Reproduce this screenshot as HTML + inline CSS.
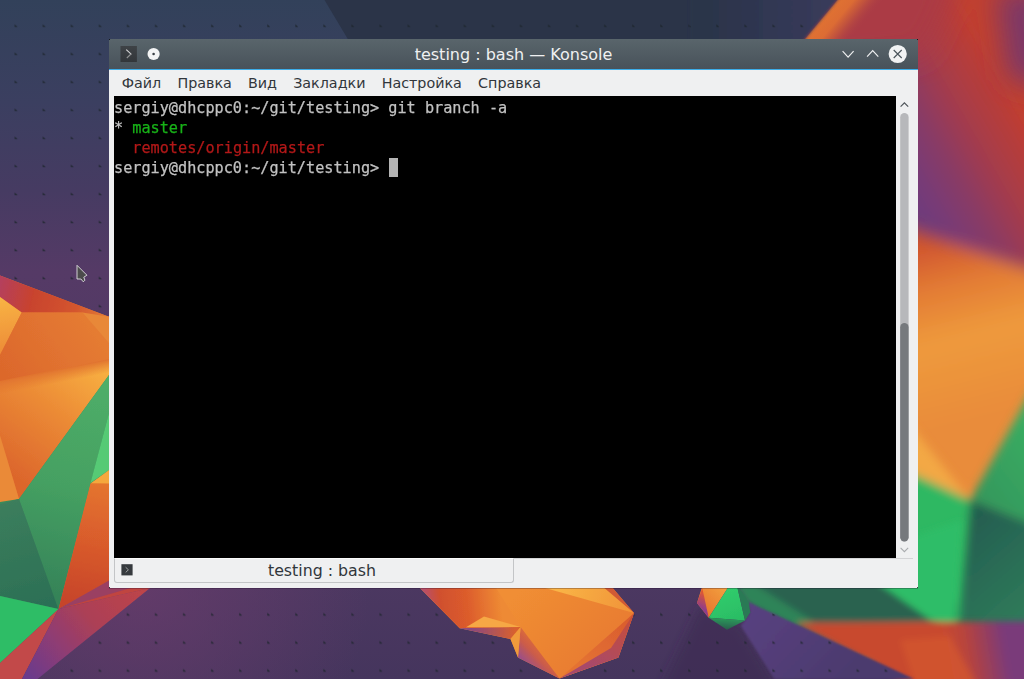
<!DOCTYPE html>
<html lang="ru">
<head>
<meta charset="utf-8">
<title>testing : bash — Konsole</title>
<style>
html,body{margin:0;padding:0;}
body{width:1024px;height:679px;overflow:hidden;position:relative;background:#46345d;font-family:"DejaVu Sans","Liberation Sans",sans-serif;}
#wall{position:absolute;left:0;top:0;width:1024px;height:679px;display:block;}
#win{position:absolute;left:109px;top:39px;width:809px;height:549px;background:#eff0f1;box-shadow:0 1px 0 rgba(30,8,40,0.28);}
#title{position:absolute;left:0;top:0;width:809px;height:30px;background:linear-gradient(#59656b,#48525a);}
#title .cap{position:absolute;left:0;top:1px;width:809px;height:29px;line-height:30px;text-align:center;color:#eff0f1;font-size:16px;white-space:nowrap;}
#hl{position:absolute;left:0;top:30px;width:809px;height:1px;background:#3daee9;}
#menu{position:absolute;left:4.6px;top:31px;height:26px;line-height:27px;font-size:14.3px;color:#31363b;white-space:nowrap;}
#menu span{display:inline-block;padding:0 8.1px;}
#term{position:absolute;left:5px;top:57px;width:782px;height:462px;background:#000;}
#term pre{margin:0;position:absolute;left:0px;top:2px;will-change:transform;font-family:"DejaVu Sans Mono","Liberation Mono",monospace;font-size:15.2px;line-height:20px;color:#c2c2c2;-webkit-text-stroke:0.25px;}
.cn{position:absolute;width:1px;height:1px;background:rgba(0,0,0,0.75);}
.g{color:#18b218}.r{color:#b21818}
#cur{position:absolute;left:274.5px;top:62px;width:9.4px;height:18.5px;background:#b4b4b4;}
#sb{position:absolute;left:787px;top:57px;width:22px;height:462px;}
#tabbar{position:absolute;left:5px;top:519px;width:799px;height:1px;background:#d3d4d6;}
#tab{position:absolute;left:5px;top:519px;width:398px;height:23px;border:1px solid #c3c5c7;border-top:1px solid #fbfbfb;border-radius:0 0 3px 3px;box-sizing:content-box;background:#eff0f1;}
#tab .t{position:absolute;left:0;top:0;width:100%;height:23px;line-height:23px;text-align:center;font-size:15.8px;color:#31363b;padding-left:16px;box-sizing:border-box;}
</style>
</head>
<body>
<svg id="wall" width="1024" height="679" viewBox="0 0 1024 679">
<defs>
<linearGradient id="base" x1="0" y1="0" x2="0" y2="1">
<stop offset="0" stop-color="#32415a"/><stop offset="0.15" stop-color="#3b3f60"/><stop offset="0.28" stop-color="#463b62"/><stop offset="0.4" stop-color="#553a66"/><stop offset="0.85" stop-color="#4c3861"/><stop offset="1" stop-color="#45355d"/>
</linearGradient>
<pattern id="dots" x="14.4" y="23.9" width="28.07" height="28.03" patternUnits="userSpaceOnUse">
<path d="M0.3 0.3 L3.2 3.2 L0.3 3.2 Z" fill="#1c242c" opacity="0.85"/>
</pattern>
<filter id="b8" x="-10%" y="-10%" width="120%" height="120%"><feGaussianBlur stdDeviation="8"/></filter>
<filter id="b14" x="-30%" y="-30%" width="160%" height="160%"><feGaussianBlur stdDeviation="14"/></filter>
<filter id="b3" x="-10%" y="-10%" width="120%" height="120%"><feGaussianBlur stdDeviation="2.5"/></filter>
<filter id="b5" x="-10%" y="-10%" width="120%" height="120%"><feGaussianBlur stdDeviation="5"/></filter>
<filter id="b3h" x="-10%" y="-10%" width="120%" height="120%"><feGaussianBlur stdDeviation="3.2"/></filter>
<filter id="b1" x="-10%" y="-10%" width="120%" height="120%"><feGaussianBlur stdDeviation="0.9"/></filter>
<filter id="b06" x="-5%" y="-5%" width="110%" height="110%"><feGaussianBlur stdDeviation="0.55"/></filter>
<filter id="b2" x="-10%" y="-20%" width="120%" height="140%"><feGaussianBlur stdDeviation="1.8"/></filter>
<filter id="b4" x="-10%" y="-10%" width="120%" height="120%"><feGaussianBlur stdDeviation="4"/></filter>
</defs>
<rect width="1024" height="679" fill="url(#base)"/>
<radialGradient id="glow1" gradientUnits="userSpaceOnUse" cx="140" cy="585" r="230"><stop offset="0" stop-color="#6a3c6c" stop-opacity="0.75"/><stop offset="1" stop-color="#6a3c6c" stop-opacity="0"/></radialGradient>
<rect width="1024" height="679" fill="url(#glow1)"/>
<g filter="url(#b5)"><polygon points="700,606 741,626 778,690 660,690" fill="#382b4e" opacity="0.55"/></g>
<polygon points="324.5,0 850,0 740,140 420,160" fill="#2b3448"/>
<rect width="1024" height="679" fill="url(#dots)"/>

<g id="leftpoly" filter="url(#b06)">
<defs>
<linearGradient id="lgA" gradientUnits="userSpaceOnUse" x1="0" y1="285" x2="109" y2="310"><stop offset="0" stop-color="#b5405c"/><stop offset="0.3" stop-color="#c8432f"/><stop offset="0.7" stop-color="#d4552e"/><stop offset="1" stop-color="#e27c36"/></linearGradient>
<linearGradient id="lgB" gradientUnits="userSpaceOnUse" x1="0" y1="300" x2="8" y2="355"><stop offset="0" stop-color="#f8b244"/><stop offset="1" stop-color="#ec8a36"/></linearGradient>
<linearGradient id="lgC" gradientUnits="userSpaceOnUse" x1="100" y1="315" x2="10" y2="380"><stop offset="0" stop-color="#e67e34"/><stop offset="1" stop-color="#dc682c"/></linearGradient>
<linearGradient id="lgE" gradientUnits="userSpaceOnUse" x1="105" y1="365" x2="20" y2="480"><stop offset="0" stop-color="#f9b242"/><stop offset="0.45" stop-color="#ec8c36"/><stop offset="1" stop-color="#dc662c"/></linearGradient>
<linearGradient id="lgSoft" gradientUnits="userSpaceOnUse" x1="50" y1="371" x2="52.6" y2="384"><stop offset="0" stop-color="#e1742f" stop-opacity="1"/><stop offset="1" stop-color="#e1742f" stop-opacity="0"/></linearGradient>
<linearGradient id="lgG" gradientUnits="userSpaceOnUse" x1="105" y1="380" x2="50" y2="600"><stop offset="0" stop-color="#4fae68"/><stop offset="0.5" stop-color="#45a062"/><stop offset="1" stop-color="#358258"/></linearGradient>
<linearGradient id="lgJ" gradientUnits="userSpaceOnUse" x1="100" y1="485" x2="75" y2="605"><stop offset="0" stop-color="#e4742f"/><stop offset="0.5" stop-color="#d85a2c"/><stop offset="1" stop-color="#c6442c"/></linearGradient>
<linearGradient id="lgK" gradientUnits="userSpaceOnUse" x1="10" y1="500" x2="40" y2="605"><stop offset="0" stop-color="#3c7e5c"/><stop offset="1" stop-color="#2c7056"/></linearGradient>
<linearGradient id="lgP" gradientUnits="userSpaceOnUse" x1="140" y1="590" x2="30" y2="679"><stop offset="0" stop-color="#bc444a"/><stop offset="0.4" stop-color="#ac4056"/><stop offset="0.7" stop-color="#8e3c74"/><stop offset="1" stop-color="#6a3a8c"/></linearGradient>
</defs>
<!-- base orange under everything on the left -->
<polygon points="0,275.5 140,328.5 140,570 112,580.5 58.5,609 0,600" fill="#e2722f"/>
<polygon points="0,275.5 109,316.7 140,328.5 140,335 82.5,312.6 21.7,312.6 0,297" fill="url(#lgA)"/>
<polygon points="0,297 21.7,312.6 0,355" fill="url(#lgB)"/>
<polygon points="21.7,312.6 82.5,312.6 140,350 140,354 0,382 0,355" fill="url(#lgC)"/>
<polygon points="82.5,312.6 109,316.7 140,328.5 140,350 109,343" fill="#e88838"/>
<polygon points="0,382 109,360 140,354 140,340 19,499 0,435.5" fill="url(#lgE)"/>
<polygon points="0,381 109,359 140,353 140,368 109,374 0,396" fill="url(#lgSoft)"/>
<polygon points="0,435.5 19,499 0,504" fill="#ea8a38"/>
<polygon points="0,502 19,499 109,375 140,332 140,450 90.5,483.4 58.5,609 0,663" fill="#3a8a5a"/>
<polygon points="109,375 140,332 140,420 109,413 90.8,482.6 58.5,609 19,499" fill="url(#lgG)"/>
<polygon points="109,413 140,400 140,450 109,470 90.5,483" fill="#56ca74"/>
<polygon points="90.5,483.4 109,470 140,450 140,484 109,484" fill="#f5a83c"/>
<polygon points="90.5,483.4 140,483.4 140,575 112,580.5 58.5,609" fill="url(#lgJ)"/>
<polygon points="0,504 19,499 58.5,609 0,596" fill="url(#lgK)"/>
<polygon points="0,596 58.5,609 0,663" fill="#2ebd66"/>
<polygon points="0,663 58.5,609 22,679 0,679" fill="#c2484a"/>
<polygon points="58.5,609 108.6,580.8 140,570 150,575 150,588" fill="#9a4062"/>
<polygon points="58.5,609 131.4,587.8 150,582 150.4,588" fill="#c0443f"/>
<polygon points="58.5,609 150,588 37.5,679 22,679" fill="url(#lgP)"/>
</g>

<g id="botpoly" filter="url(#b06)">
<defs>
<linearGradient id="bgMain" gradientUnits="userSpaceOnUse" x1="520" y1="590" x2="600" y2="670"><stop offset="0" stop-color="#f08e34"/><stop offset="1" stop-color="#e87a30"/></linearGradient>
<linearGradient id="bgR" gradientUnits="userSpaceOnUse" x1="634" y1="614" x2="585" y2="670"><stop offset="0" stop-color="#d85a2e"/><stop offset="1" stop-color="#e47232"/></linearGradient>
<linearGradient id="bgRR" gradientUnits="userSpaceOnUse" x1="634" y1="614" x2="600" y2="672"><stop offset="0" stop-color="#c84e36"/><stop offset="1" stop-color="#a84a6a"/></linearGradient>
<linearGradient id="bgF" gradientUnits="userSpaceOnUse" x1="545" y1="640" x2="520" y2="664"><stop offset="0" stop-color="#e87830"/><stop offset="0.5" stop-color="#cc5c48"/><stop offset="1" stop-color="#8c4a9c"/></linearGradient>
<linearGradient id="bgL" gradientUnits="userSpaceOnUse" x1="425" y1="600" x2="500" y2="592"><stop offset="0" stop-color="#b8506a"/><stop offset="0.2" stop-color="#d0502e"/><stop offset="0.55" stop-color="#dc5c2c"/><stop offset="1" stop-color="#ee8a34"/></linearGradient>
<linearGradient id="bgHi" gradientUnits="userSpaceOnUse" x1="560" y1="586" x2="634" y2="613"><stop offset="0" stop-color="#f9b446"/><stop offset="1" stop-color="#f09238"/></linearGradient>
<linearGradient id="bgL2" gradientUnits="userSpaceOnUse" x1="462" y1="629" x2="515" y2="634"><stop offset="0" stop-color="#7a4290"/><stop offset="1" stop-color="#d8602e"/></linearGradient>
<linearGradient id="bgPur" gradientUnits="userSpaceOnUse" x1="760" y1="600" x2="840" y2="679"><stop offset="0" stop-color="#584180"/><stop offset="1" stop-color="#4c3a6e"/></linearGradient>
<linearGradient id="sgG" gradientUnits="userSpaceOnUse" x1="725" y1="590" x2="740" y2="628"><stop offset="0" stop-color="#30cc6c"/><stop offset="1" stop-color="#2ab862"/></linearGradient>
</defs>
<!-- big orange polyhedron -->
<polygon points="418,586 611,586 634,613 618.4,657.5 559.5,678.5 518,657.5 510.5,639 459.7,628.2" fill="url(#bgMain)"/>
<polygon points="418,586 495,586 520.6,627 459.7,628.2" fill="url(#bgL)"/>
<polygon points="466,627.2 520.6,627 484,616.5" fill="#f6a844"/>
<polygon points="459.7,628.2 520.6,627 510.5,639" fill="url(#bgL2)"/>
<polygon points="538,586 603,586 634,613" fill="url(#bgHi)"/>
<polygon points="602,586 611,586 634,613" fill="#d05a34"/>
<polygon points="634,613 618.4,657.5 559.5,678.5" fill="url(#bgR)"/>
<polygon points="634,613 618.4,657.5 559.5,678.5 611,648" fill="url(#bgRR)"/>
<polygon points="520.6,627 518,657.5 559.5,678.5" fill="url(#bgF)"/>
<polygon points="520.6,627 510.5,639 518,657.5" fill="#f09a3a"/>
</g>

<g id="rightblur">
<defs>
<linearGradient id="rgRed" gradientUnits="userSpaceOnUse" x1="1019" y1="104" x2="899.4" y2="172.3"><stop offset="0" stop-color="#c2402e"/><stop offset="0.12" stop-color="#b83c38"/><stop offset="0.35" stop-color="#a83c48"/><stop offset="0.5" stop-color="#9a3a55"/><stop offset="0.62" stop-color="#8c3a62"/><stop offset="0.85" stop-color="#7a3a74"/><stop offset="1" stop-color="#703a7c"/></linearGradient>
<linearGradient id="navyG" gradientUnits="userSpaceOnUse" x1="695" y1="0" x2="825" y2="0"><stop offset="0" stop-color="#2b3448"/><stop offset="0.45" stop-color="#2e3650"/><stop offset="1" stop-color="#383a5a"/></linearGradient>
<linearGradient id="rgEdge" gradientUnits="userSpaceOnUse" x1="821.3" y1="19.35" x2="849" y2="42.4"><stop offset="0" stop-color="#e07232"/><stop offset="0.35" stop-color="#dc6c34"/><stop offset="0.6" stop-color="#c4563c" stop-opacity="0.85"/><stop offset="1" stop-color="#a83c48" stop-opacity="0"/></linearGradient>
<linearGradient id="rgOr" gradientUnits="userSpaceOnUse" x1="940" y1="238" x2="985" y2="415"><stop offset="0" stop-color="#cf522e"/><stop offset="0.25" stop-color="#e27a34"/><stop offset="0.55" stop-color="#ee9a3c"/><stop offset="1" stop-color="#e98c3a"/></linearGradient>
<linearGradient id="rgDG" gradientUnits="userSpaceOnUse" x1="970" y1="520" x2="1040" y2="600"><stop offset="0" stop-color="#245e50"/><stop offset="1" stop-color="#2f7a5a"/></linearGradient>
<linearGradient id="rgMG" gradientUnits="userSpaceOnUse" x1="975" y1="490" x2="1040" y2="440"><stop offset="0" stop-color="#34985c"/><stop offset="1" stop-color="#3aac62"/></linearGradient>
<linearGradient id="rgBR" gradientUnits="userSpaceOnUse" x1="945" y1="650" x2="1005" y2="640"><stop offset="0" stop-color="#c8492f"/><stop offset="0.35" stop-color="#b8443c"/><stop offset="1" stop-color="#7a3a7a"/></linearGradient>
<linearGradient id="rgBG" gradientUnits="userSpaceOnUse" x1="800" y1="588" x2="800" y2="624"><stop offset="0" stop-color="#2f8a5a"/><stop offset="1" stop-color="#26604c"/></linearGradient>
</defs>
<g filter="url(#b8)">
<polygon points="826,-20 1060,-20 1060,290 918,226 760,170 782,56" fill="url(#rgRed)"/>
<polygon points="880,218 918,231 1060,281 1060,560 845,560 845,420" fill="url(#rgOr)"/>
</g>
<g filter="url(#b5)">
<polygon points="860,363 918,435 970,500 918,476 860,450" fill="#f3a845"/>
<polygon points="1060,340 970,500 1060,535" fill="url(#rgMG)"/>
<polygon points="970,500 1060,535 1060,660 955,660" fill="url(#rgDG)"/>
<polygon points="845,443 918,476 970,500 955,660 845,660" fill="#2eb862"/>
</g>
<g filter="url(#b3h)">
<polygon points="730,560 845,560 931,620 957,600 957,660 780,660" fill="#2a6250"/>
<polygon points="734,584 754,584 814,622 797,628 746,603" fill="#2f8459"/>
<polygon points="845,560 962,520 955,625 931,620" fill="#2ebd68"/>
<polygon points="796,623 1060,621 1060,700 940,700" fill="url(#rgBR)"/>
<polygon points="900,640 950,636 985,700 920,700" fill="#d2562f" opacity="0.8"/>
</g>
<g filter="url(#b14)">
<polygon points="800,-30 965,-30 925,55 770,70" fill="#ab3b44"/>
<polygon points="996,-10 1070,-10 1070,90 1008,80" fill="#7c3868"/>
</g>
<polygon points="870.7,-40 780,69 807.7,92 898.4,-17" fill="url(#rgEdge)"/>
<g filter="url(#b2)"><polygon points="690,-12 847.4,-12 837.4,0 805.2,38.7 778,71.4 690,71.4" fill="url(#navyG)"/></g>
<clipPath id="cpNavy"><polygon points="690,0 834,0 802,38.7 690,38.7"/></clipPath>
<rect width="1024" height="679" fill="url(#dots)" clip-path="url(#cpNavy)"/>
</g>

<g id="purpoly">
<clipPath id="cpPur"><polygon points="748.6,602.3 797,624.5 914,679 774.5,679 741,626 745,620.4 750.3,612.2"/></clipPath>
<g filter="url(#b1)"><polygon points="748.6,602.3 797,624.5 914,679 774.5,679 741,626 745,620.4 750.3,612.2" fill="url(#bgPur)"/></g>
<rect width="1024" height="679" fill="url(#dots)" clip-path="url(#cpPur)"/>
</g>
<g id="smallpoly" filter="url(#b06)">
<defs>
<linearGradient id="spO" gradientUnits="userSpaceOnUse" x1="726" y1="588" x2="704" y2="612"><stop offset="0" stop-color="#f2a03e"/><stop offset="1" stop-color="#e8762f"/></linearGradient>
<linearGradient id="spS" gradientUnits="userSpaceOnUse" x1="705" y1="592" x2="698" y2="607"><stop offset="0" stop-color="#e4582c"/><stop offset="1" stop-color="#8e3c8c"/></linearGradient>
<linearGradient id="spL" gradientUnits="userSpaceOnUse" x1="728" y1="618" x2="727" y2="630"><stop offset="0" stop-color="#2a9c5c"/><stop offset="1" stop-color="#2a5c4c"/></linearGradient>
</defs>
<polygon points="702.3,586 729,586 708.7,617.7 697,603" fill="url(#spO)"/>
<polygon points="697,603 702.3,588 708.7,617.7" fill="url(#spS)"/>
<polygon points="729,586 737,586 745,620.4 708.7,617.7" fill="url(#sgG)"/>
<polygon points="708.7,617.7 745,620.4 726.9,629.8" fill="url(#spL)"/>
<polygon points="737,586 745.6,596.4 748.6,602.3 750.3,612.2 745,620.4" fill="#2c7a55"/>
</g>
</svg>
<div id="win">
<div id="title">
<div class="cap">testing : bash — Konsole</div>
<svg style="position:absolute;left:0;top:0" width="809" height="30" viewBox="109 39 809 30">
<defs><linearGradient id="kico" x1="0" y1="0" x2="0" y2="1"><stop offset="0" stop-color="#3e4246"/><stop offset="1" stop-color="#32363a"/></linearGradient></defs>
<rect x="120.5" y="46" width="16.4" height="16" fill="url(#kico)"/>
<path d="M126.6 50 L131 54" fill="none" stroke="#d4d5d6" stroke-width="1.05" stroke-linecap="square"/><path d="M131 54 L126.8 58" fill="none" stroke="#909294" stroke-width="1.05"/>
<circle cx="153.6" cy="54" r="6.1" fill="#f4f5f5"/>
<circle cx="153.6" cy="54" r="1.3" fill="#3a4046"/>
<path d="M842.6 51.2 L848.1 57.2 L853.6 51.2" fill="none" stroke="#eff0f1" stroke-width="1.15"/>
<path d="M867.1 56.6 L872.7 50.5 L878.3 56.6" fill="none" stroke="#eff0f1" stroke-width="1.15"/>
<circle cx="897.7" cy="54" r="9.1" fill="#f1f2f3"/>
<path d="M893.7 50 L901.7 58 M901.7 50 L893.7 58" fill="none" stroke="#4a545b" stroke-width="1.15"/>
</svg>
</div>
<div id="hl"></div>
<div id="menu"><span>Файл</span><span>Правка</span><span>Вид</span><span>Закладки</span><span>Настройка</span><span>Справка</span></div>
<div id="term"><pre>sergiy@dhcppc0:~/git/testing&gt; git branch -a
* <span class="g">master</span>
  <span class="r">remotes/origin/master</span>
sergiy@dhcppc0:~/git/testing&gt; </pre><div id="cur"></div></div>
<svg id="sb" width="22" height="462" viewBox="896 96 22 462">
<path d="M900.6 106.6 L904.4 102.9 L908.2 106.6" fill="none" stroke="#4d5358" stroke-width="1.2"/>
<rect x="900.2" y="113" width="8.4" height="428.5" rx="4.2" fill="#b7b8bb"/>
<rect x="900.2" y="323" width="8.4" height="218.5" rx="4.2" fill="#76797d"/>
<path d="M900.6 547.8 L904.4 551.6 L908.2 547.8" fill="none" stroke="#a9acaf" stroke-width="1.1"/>
</svg>
<div id="tabbar"></div>
<i class="cn" style="left:0;top:0"></i><i class="cn" style="right:0;top:0"></i><i class="cn" style="left:0;bottom:0"></i><i class="cn" style="right:0;bottom:0"></i>
<div id="tab"><div class="t">testing : bash</div><svg style="position:absolute;left:6px;top:5px" width="12" height="12" viewBox="0 0 12 12"><rect x="0.4" y="0.2" width="11.2" height="11.2" fill="#363a3e"/><path d="M4.6 3.2 L7.4 5.8 L4.7 8.4" fill="none" stroke="#a8aaac" stroke-width="0.9"/></svg></div>
</div>
<svg style="position:absolute;left:70px;top:260px" width="24" height="28" viewBox="70 260 24 28">
<path d="M77.0 265.3 L77.0 279 L80.9 279 L83.3 281.8 L84.9 280.2 L83.8 277.2 L86.9 275.2 Z" fill="#4b4b4b" stroke="#e9e9ea" stroke-width="0.85" stroke-linejoin="round"/>
</svg>
</body>
</html>
